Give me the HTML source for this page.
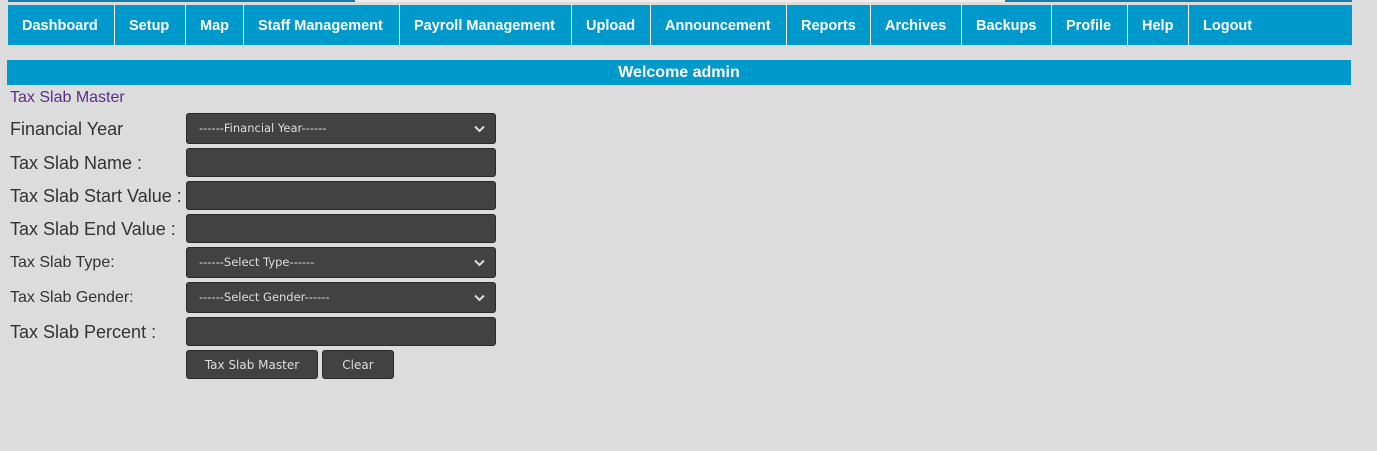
<!DOCTYPE html>
<html><head><style>
body{margin:0;width:1377px;height:451px;background:#dcdcdc;font-family:"Liberation Sans",Arial,sans-serif;position:relative;overflow:hidden}
.a{position:absolute}
.nav{position:absolute;top:5px;left:8px;width:1344px;height:40px;background:#0099cc}
.nav div{position:absolute;top:0;height:40px;line-height:42px;color:#fff;font-weight:bold;font-size:14.5px;border-left:1px solid #fff;box-sizing:border-box;padding-left:14px}
.lbl{position:absolute;left:10px;color:#333;font-size:18px}
.sm{font-size:16px}
.f{position:absolute;left:186px;width:310px;background:#424242;border:1px solid #2a2a2a;border-radius:3px;box-sizing:border-box;color:#ddd;font-size:11.5px;font-family:"DejaVu Sans",sans-serif;padding-left:12px}
.f svg{position:absolute;right:10px;top:50%;margin-top:-4px}
.b{position:absolute;top:350px;height:29px;background:#424242;border:1px solid #2a2a2a;border-radius:3px;box-sizing:border-box;color:#ddd;font-size:12px;font-family:"DejaVu Sans",sans-serif;text-align:center;line-height:28px}
</style></head><body>
<div class="a" style="top:0;left:8px;width:347px;height:2px;background:#1a7aa8"></div>
<div class="a" style="top:0;left:355px;width:650px;height:2px;background:#f2ecea"></div>
<div class="a" style="top:0;left:1005px;width:347px;height:2px;background:#1a7aa8"></div>
<div class="nav">
<div style="left:0;width:106px;border-left:none">Dashboard</div>
<div style="left:106px;width:71px">Setup</div>
<div style="left:177px;width:58px">Map</div>
<div style="left:235px;width:156px">Staff Management</div>
<div style="left:391px;width:172px">Payroll Management</div>
<div style="left:563px;width:79px">Upload</div>
<div style="left:642px;width:136px">Announcement</div>
<div style="left:778px;width:84px">Reports</div>
<div style="left:862px;width:91px">Archives</div>
<div style="left:953px;width:90px">Backups</div>
<div style="left:1043px;width:76px">Profile</div>
<div style="left:1119px;width:61px">Help</div>
<div style="left:1180px;width:164px">Logout</div>
</div>
<div class="a" style="top:60px;left:7px;width:1344px;height:25px;background:#0099cc;color:#fff;font-weight:bold;font-size:16px;text-align:center;line-height:26px">Welcome admin</div>
<div class="a" style="top:89px;left:10px;color:#5b2d8e;font-size:16px">Tax Slab Master</div>

<div class="lbl" style="top:119px">Financial Year</div>
<div class="lbl" style="top:153px">Tax Slab Name :</div>
<div class="lbl" style="top:186px">Tax Slab Start Value :</div>
<div class="lbl" style="top:219px">Tax Slab End Value :</div>
<div class="lbl sm" style="top:254px">Tax Slab Type:</div>
<div class="lbl sm" style="top:289px">Tax Slab Gender:</div>
<div class="lbl" style="top:322px">Tax Slab Percent :</div>

<div class="f" style="top:113px;height:31px;line-height:29px">------Financial Year------<svg width="11" height="8" viewBox="0 0 11 8"><path d="M1 1.5l4.5 4.5 4.5-4.5" stroke="#ddd" stroke-width="2" fill="none"/></svg></div>
<div class="f" style="top:148px;height:29px"></div>
<div class="f" style="top:181px;height:29px"></div>
<div class="f" style="top:214px;height:29px"></div>
<div class="f" style="top:247px;height:31px;line-height:29px">------Select Type------<svg width="11" height="8" viewBox="0 0 11 8"><path d="M1 1.5l4.5 4.5 4.5-4.5" stroke="#ddd" stroke-width="2" fill="none"/></svg></div>
<div class="f" style="top:282px;height:31px;line-height:29px">------Select Gender------<svg width="11" height="8" viewBox="0 0 11 8"><path d="M1 1.5l4.5 4.5 4.5-4.5" stroke="#ddd" stroke-width="2" fill="none"/></svg></div>
<div class="f" style="top:317px;height:29px"></div>
<div class="b" style="left:186px;width:132px">Tax Slab Master</div>
<div class="b" style="left:322px;width:72px">Clear</div>
</body></html>
